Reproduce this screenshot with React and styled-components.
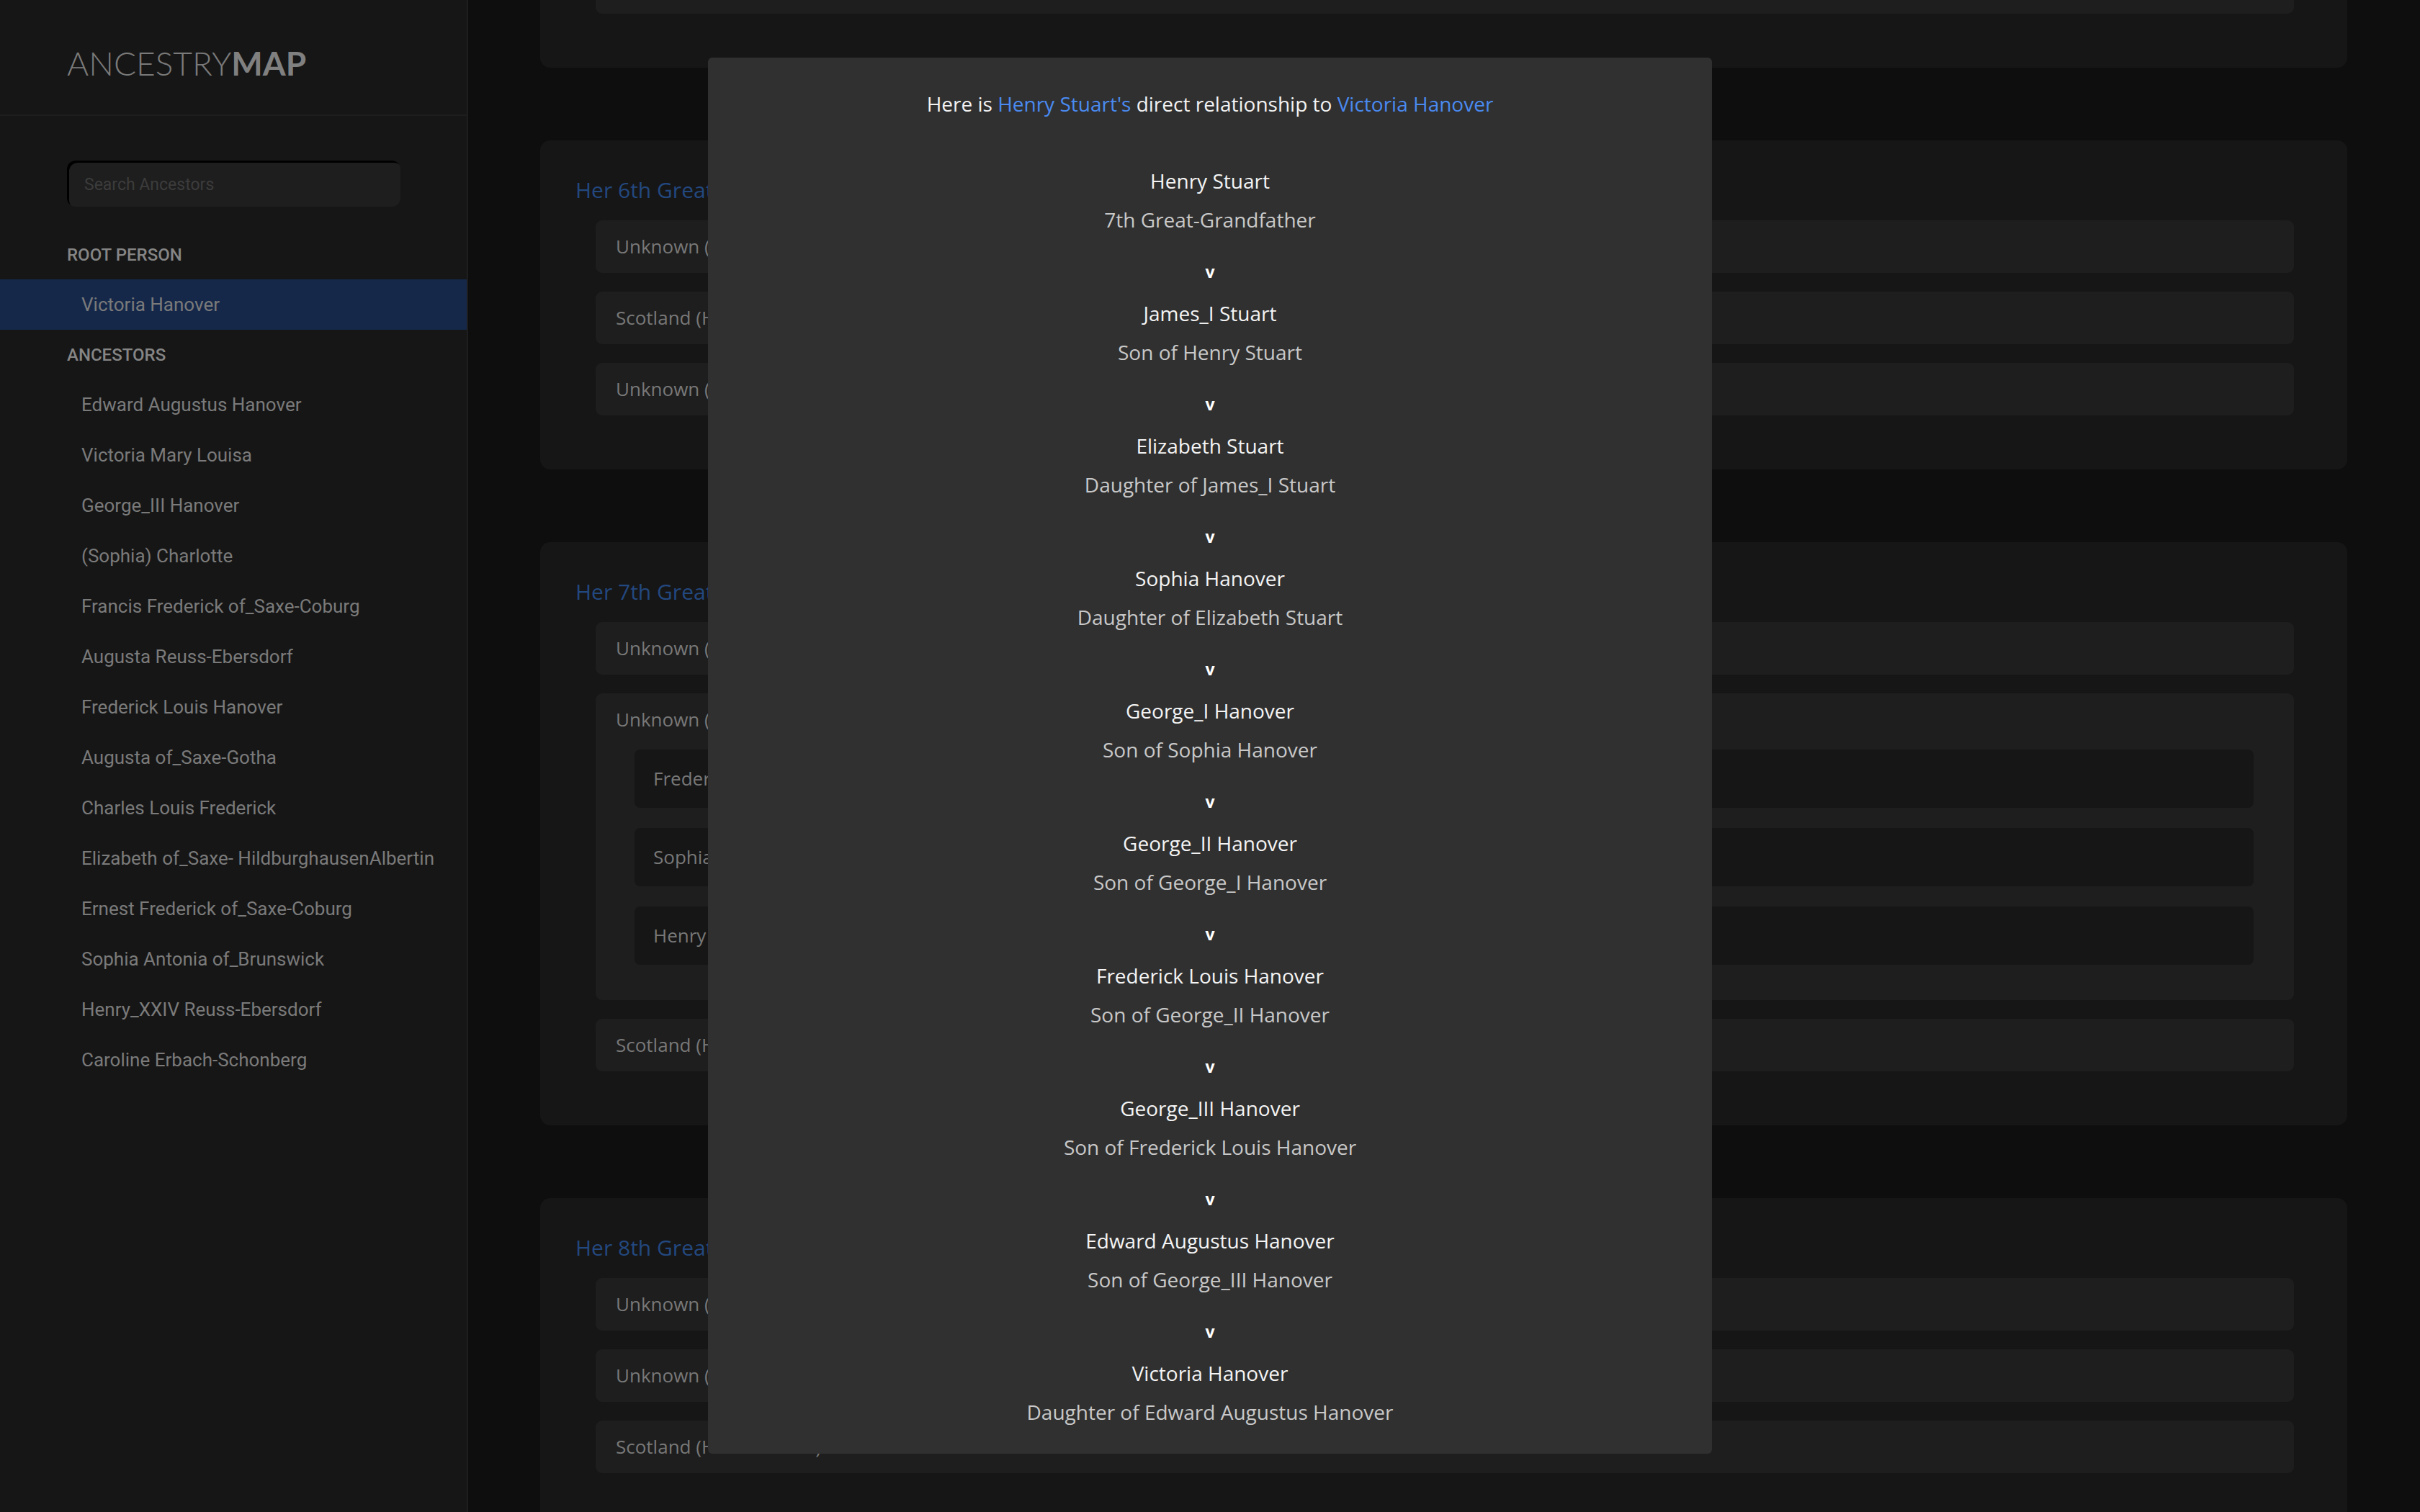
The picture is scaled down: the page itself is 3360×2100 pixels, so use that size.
import { useLayoutEffect, useRef } from "react";
import styled, { createGlobalStyle } from "styled-components";

const GlobalStyle = createGlobalStyle`
  html, body {
    margin: 0;
    padding: 0;
    background: #0e0e0e;
    overflow: hidden;
  }
  * { box-sizing: border-box; }
`;

const Shell = styled.div`
  display: flex;
  height: 100vh;
  width: 100vw;
  background: #0e0e0e;
`;

/* ---------- sidebar ---------- */

const Sidebar = styled.aside`
  width: 650px;
  flex-shrink: 0;
  background: #161616;
  border-right: 2px solid #1e1e1e;
  display: flex;
  flex-direction: column;
  font-family: Roboto, "Liberation Sans", sans-serif;
`;

const Brand = styled.div`
  height: 161px;
  display: flex;
  align-items: center;
  padding: 16px 0 0 93px;
  border-bottom: 2px solid #1e1e1e;
  font-family: Lato, "Open Sans", sans-serif;
  font-size: 46px;
  font-weight: 300;
  color: #7a7a7a;
  b {
    font-weight: 700;
    color: #808080;
  }
`;

const Search = styled.input`
  margin: 62px 0 0 93px;
  width: 463px;
  height: 64px;
  border: none;
  border-radius: 12px;
  background: #1e1e1e;
  box-shadow: inset 3px 3px 0 #000;
  padding: 2px 24px 0;
  font-family: Roboto, "Liberation Sans", sans-serif;
  font-size: 23px;
  color: #888;
  outline: none;
  &::placeholder {
    color: #3c3c3c;
  }
`;

const SectionLabel = styled.div`
  padding-left: 93px;
  margin-top: ${p => p.$top}px;
  margin-bottom: 17px;
  height: 34px;
  line-height: 34px;
  font-size: 24px;
  font-weight: 500;
  color: #858585;
`;

const PersonItem = styled.div`
  height: 70px;
  line-height: 70px;
  padding-left: 113px;
  font-size: 26px;
  color: #7a7a7a;
  white-space: nowrap;
  background: ${p => (p.$active ? "#15284a" : "transparent")};
`;

/* ---------- main column ---------- */

const Main = styled.main`
  flex: 1;
  position: relative;
  overflow-y: auto;
  scrollbar-width: none;
  padding: 100px 101px 100px 100px;
  display: flex;
  flex-direction: column;
  gap: 101px;
  font-family: "Open Sans", "Noto Sans", sans-serif;
  &::-webkit-scrollbar { display: none; }
`;

const Card = styled.section`
  flex-shrink: 0;
  background: #161616;
  border-radius: 14px;
  padding: 49px 46px 75px 49px;
`;

const CardTitle = styled.h2`
  margin: 0 0 22px;
  height: 40px;
  line-height: 40px;
  font-size: 30px;
  font-weight: 400;
  color: #23487f;
`;

const RowList = styled.div`
  display: flex;
  flex-direction: column;
  gap: 26px;
  padding: 0 28px;
`;

const Row = styled.div`
  background: #1e1e1e;
  border-radius: 9px;
  padding: 0 0 ${p => (p.$open ? 49 : 0)}px;
`;

const RowLabel = styled.div`
  height: 73px;
  line-height: 73px;
  padding-left: 28px;
  font-size: 26px;
  color: #787878;
  white-space: nowrap;
`;

const SubList = styled.div`
  display: flex;
  flex-direction: column;
  gap: 28px;
  margin: 5px 56px 0 54px;
`;

const SubRow = styled.div`
  height: 81px;
  line-height: 81px;
  padding-left: 26px;
  background: #161616;
  border-radius: 8px;
  font-size: 26px;
  color: #787878;
  white-space: nowrap;
`;

/* ---------- modal ---------- */

const Overlay = styled.div`
  position: fixed;
  inset: 0;
  display: flex;
  justify-content: center;
  align-items: flex-start;
  padding-top: 80px;
  font-family: "Open Sans", "Noto Sans", sans-serif;
`;

const Modal = styled.div`
  width: 1394px;
  background: #303030;
  border-radius: 6px;
  padding: 46px 0 40px;
  display: flex;
  flex-direction: column;
  align-items: center;
`;

const Intro = styled.p`
  margin: 0 0 71px;
  line-height: 36px;
  font-size: 28px;
  color: #f2f2f2;
  span {
    color: #4a8af0;
  }
`;

const StepName = styled.div`
  line-height: 36px;
  font-size: 28px;
  color: #f4f4f4;
`;

const StepRelation = styled.div`
  margin-top: 18px;
  line-height: 36px;
  font-size: 28px;
  color: #c8c8c8;
`;

const Chevron = styled.div`
  margin: 44px 0 30px;
  line-height: 20px;
  font-size: 23px;
  font-weight: 700;
  color: #fff;
`;

const ancestors = [
  "Edward Augustus Hanover",
  "Victoria Mary Louisa",
  "George_III Hanover",
  "(Sophia) Charlotte",
  "Francis Frederick of_Saxe-Coburg",
  "Augusta Reuss-Ebersdorf",
  "Frederick Louis Hanover",
  "Augusta of_Saxe-Gotha",
  "Charles Louis Frederick",
  "Elizabeth of_Saxe- HildburghausenAlbertin",
  "Ernest Frederick of_Saxe-Coburg",
  "Sophia Antonia of_Brunswick",
  "Henry_XXIV Reuss-Ebersdorf",
  "Caroline Erbach-Schonberg",
];

const chain = [
  ["Henry Stuart", "7th Great-Grandfather"],
  ["James_I Stuart", "Son of Henry Stuart"],
  ["Elizabeth Stuart", "Daughter of James_I Stuart"],
  ["Sophia Hanover", "Daughter of Elizabeth Stuart"],
  ["George_I Hanover", "Son of Sophia Hanover"],
  ["George_II Hanover", "Son of George_I Hanover"],
  ["Frederick Louis Hanover", "Son of George_II Hanover"],
  ["George_III Hanover", "Son of Frederick Louis Hanover"],
  ["Edward Augustus Hanover", "Son of George_III Hanover"],
  ["Victoria Hanover", "Daughter of Edward Augustus Hanover"],
];

const generations = [
  {
    title: "Her 5th Great-Grandparents",
    rows: [{ label: "Unknown" }, { label: "Unknown" }, { label: "Scotland" }],
  },
  {
    title: "Her 6th Great-Grandparents",
    rows: [{ label: "Unknown (Palatinate)" }, { label: "Scotland (House Stuart)" }, { label: "Unknown (Denmark)" }],
  },
  {
    title: "Her 7th Great-Grandparents",
    rows: [
      { label: "Unknown (Stuart)" },
      {
        label: "Unknown (Hanover)",
        children: ["Frederick V of the Palatinate", "Sophia Hanover", "Henry Stuart"],
      },
      { label: "Scotland (House Stuart)" },
    ],
  },
  {
    title: "Her 8th Great-Grandparents",
    rows: [{ label: "Unknown (Lennox)" }, { label: "Unknown (Stuart)" }, { label: "Scotland (House Stuart)" }],
  },
];

const SCROLL_ANCHOR = 195;

export default function App() {
  const mainRef = useRef(null);
  const anchorRef = useRef(null);

  useLayoutEffect(() => {
    if (mainRef.current && anchorRef.current) {
      mainRef.current.scrollTop = anchorRef.current.offsetTop - SCROLL_ANCHOR;
    }
  }, []);

  return (
    <Shell>
      <GlobalStyle />
      <Sidebar>
        <Brand>
          ANCESTRY<b>MAP</b>
        </Brand>
        <Search placeholder="Search Ancestors" />
        <SectionLabel $top={50}>ROOT PERSON</SectionLabel>
        <PersonItem $active>Victoria Hanover</PersonItem>
        <SectionLabel $top={18}>ANCESTORS</SectionLabel>
        {ancestors.map(name => (
          <PersonItem key={name}>{name}</PersonItem>
        ))}
      </Sidebar>

      <Main ref={mainRef}>
        {generations.map((gen, i) => (
          <Card key={gen.title} ref={i === 1 ? anchorRef : null}>
            <CardTitle>{gen.title}</CardTitle>
            <RowList>
              {gen.rows.map((row, j) => (
                <Row key={j} $open={!!row.children}>
                  <RowLabel>{row.label}</RowLabel>
                  {row.children && (
                    <SubList>
                      {row.children.map(child => (
                        <SubRow key={child}>{child}</SubRow>
                      ))}
                    </SubList>
                  )}
                </Row>
              ))}
            </RowList>
          </Card>
        ))}
      </Main>

      <Overlay>
        <Modal>
          <Intro>
            Here is <span>Henry Stuart's</span> direct relationship to <span>Victoria Hanover</span>
          </Intro>
          {chain.map(([name, relation], i) => (
            <div key={name} style={{ display: "contents" }}>
              <StepName>{name}</StepName>
              <StepRelation>{relation}</StepRelation>
              {i < chain.length - 1 && <Chevron>v</Chevron>}
            </div>
          ))}
        </Modal>
      </Overlay>
    </Shell>
  );
}
